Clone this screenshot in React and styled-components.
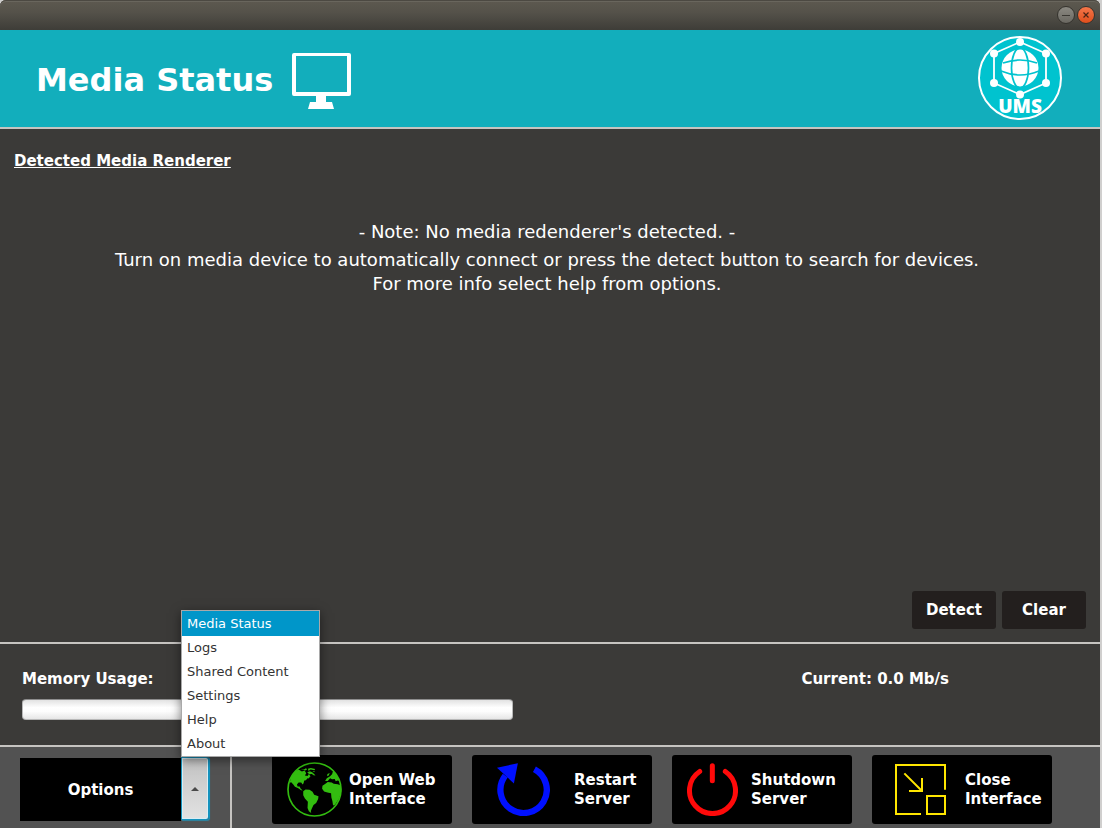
import React, { useState } from 'react';
import styled, { createGlobalStyle } from 'styled-components';

const GlobalStyle = createGlobalStyle`
  * { box-sizing: border-box; }
  body {
    margin: 0;
    background: #d0cfce;
    font-family: 'DejaVu Sans', sans-serif;
    color: #fff;
  }
  button { font-family: inherit; border: 0; padding: 0; cursor: pointer; }
`;

const Window = styled.div`
  display: flex;
  flex-direction: column;
  min-height: 100vh;
  margin-right: 2px;
`;

const TitleBar = styled.div`
  display: flex;
  justify-content: flex-end;
  align-items: center;
  gap: 2px;
  height: 30px;
  padding-right: 5px;
  border-radius: 6px 6px 0 0;
  background: linear-gradient(#5d5950, #55524a 40%, #3e3d38);
  box-shadow: inset 0 1px 0 #4c4942, inset 0 2px 0 #69665d;
`;

const WindowButton = styled.button`
  display: flex;
  width: 18px;
  height: 18px;
  border: 1px solid #35332e;
  border-radius: 50%;
  background: ${(p) => (p.$close ? 'linear-gradient(#f4764a, #df4e1c)' : 'linear-gradient(#8b8982, #6a6861)')};
  svg { display: block; }
`;

const Header = styled.header`
  display: flex;
  align-items: center;
  height: 99px;
  padding: 0 38px 0 36px;
  gap: 19px;
  background: #12aebc;
  border-bottom: 2px solid #c6c4c1;
`;

const Title = styled.h1`
  margin: 2px 0 0;
  font-size: 32px;
  line-height: 38px;
`;

const Monitor = styled.svg`
  margin-top: 4px;
`;

const Logo = styled.div`
  margin: 0 0 2px auto;
  svg { display: block; }
`;

const Main = styled.main`
  display: flex;
  flex-direction: column;
  flex: 1;
  padding: 22px 14px 13px;
  background: #3b3a38;
`;

const Heading = styled.h2`
  margin: 0;
  font-size: 15px;
  line-height: 20px;
  text-decoration: underline;
  text-decoration-thickness: 1px;
  text-underline-offset: 1px;
`;

const Note = styled.div`
  display: flex;
  flex-direction: column;
  gap: 4px;
  margin-top: 49px;
  padding-right: 6px;
  text-align: center;
  font-size: 18px;
  line-height: 24px;
  p { margin: 0; }
`;

const Actions = styled.div`
  display: flex;
  justify-content: flex-end;
  gap: 6px;
  margin-top: auto;
`;

const SmallButton = styled.button`
  width: 84px;
  height: 38px;
  border-radius: 3px;
  background: #231f1e;
  color: #fff;
  font-size: 15px;
  font-weight: bold;
`;

const Stats = styled.section`
  display: flex;
  justify-content: space-between;
  height: 103px;
  padding: 24px 151px 0 22px;
  background: #3b3a38;
  border-top: 2px solid #c6c4c1;
  font-size: 15px;
  font-weight: bold;
  line-height: 22px;
`;

const Memory = styled.div`
  flex: 0 1 491px;
`;

const Meter = styled.div`
  height: 21px;
  margin-top: 9px;
  border: 1px solid #b8b8b8;
  border-top-color: #8d8d8d;
  border-radius: 4px;
  background: linear-gradient(#e2e2e2, #fff 40%, #fdfdfd 60%, #e6e6e6);
`;

const Footer = styled.footer`
  display: flex;
  height: 83px;
  background: #525252;
  border-top: 2px solid #c6c4c1;
`;

const OptionsCell = styled.div`
  display: flex;
  align-items: flex-start;
  flex: 0 0 232px;
  padding: 10px 20px 0;
  border-right: 2px solid #c6c4c1;
`;

const OptionsButton = styled.button`
  width: 161px;
  height: 64px;
  border-top: 1px solid #525252;
  background: #000;
  color: #fff;
  font-size: 15px;
  font-weight: bold;
`;

const Anchor = styled.div`
  position: relative;
`;

const ArrowButton = styled.button`
  display: flex;
  align-items: center;
  justify-content: center;
  width: 28px;
  height: 63px;
  border: 1px solid #1592bd;
  border-radius: 0 3px 3px 0;
  background: linear-gradient(#c2c2c2, #e2e2e2);
  box-shadow: inset 0 0 0 1px #d9edf4, 1px 0 0 #1592bd, 1px 1px 1px #2a87a5;
`;

const Menu = styled.div`
  position: absolute;
  left: 0;
  bottom: 100%;
  width: 139px;
  display: flex;
  flex-direction: column;
  border: 1px solid #a9a9a9;
  background: #fff;
  box-shadow: 0 3px 10px rgba(0, 0, 0, 0.5);
`;

const MenuItem = styled.button`
  height: 24px;
  padding: 0 5px;
  text-align: left;
  font-size: 13px;
  line-height: 24px;
  color: ${(p) => (p.$active ? '#fff' : '#333')};
  background: ${(p) => (p.$active ? '#0096c9' : '#fff')};
  &:first-child { height: 25px; }
`;

const Toolbar = styled.nav`
  display: grid;
  grid-template-columns: repeat(4, 1fr);
  align-items: start;
  gap: 20px;
  flex: 1;
  padding: 8px 48px 0 40px;
`;

const ToolButton = styled.button`
  display: flex;
  align-items: center;
  gap: ${(p) => p.$gap}px;
  height: 69px;
  padding-left: ${(p) => p.$inset}px;
  border-radius: 3px;
  background: #000;
  color: #fff;
  font-size: 15px;
  font-weight: bold;
  line-height: 19px;
  text-align: left;
  svg { flex: none; }
`;

const MonitorIcon = () => (
  <Monitor width="60" height="56" viewBox="0 0 60 56" fill="#fff" aria-hidden="true">
    <path fillRule="evenodd" d="M2 0H57Q59 0 59 2V41Q59 43 57 43H34V49H40L42 56H16L18 49H24V43H2Q0 43 0 41V2Q0 0 2 0ZM4 3V39H55V3Z" />
  </Monitor>
);

const UmsLogo = () => (
  <svg width="84" height="84" viewBox="978 36 84 84" role="img" aria-label="UMS">
    <circle cx="1020" cy="78" r="41" fill="#00c3cf" stroke="#fff" strokeWidth="2" />
    <path d="M1020 42L1046 53.500V83L1020 94.500L994 83V53.500Z" fill="none" stroke="#fff" strokeWidth="1.800" />
    <g fill="#fff">
      <circle cx="1020" cy="42" r="4" />
      <circle cx="1046" cy="53.500" r="4" />
      <circle cx="1046" cy="83" r="4" />
      <circle cx="1020" cy="94.500" r="4" />
      <circle cx="994" cy="83" r="4" />
      <circle cx="994" cy="53.500" r="4" />
      <circle cx="1020" cy="68" r="18.500" />
    </g>
    <g fill="none" stroke="#00c3cf" strokeWidth="1.700">
      <ellipse cx="1020" cy="68" rx="8.500" ry="20" />
      <path d="M1003 63Q1020 57 1037 63M1001 71Q1020 79 1039 71" />
    </g>
    <text x="1020" y="113" textAnchor="middle" fill="#fff" fontFamily="'Open Sans', 'Noto Sans', sans-serif" fontSize="19" fontWeight="800">UMS</text>
  </svg>
);

const GlobeIcon = () => (
  <svg width="55" height="55" viewBox="51 50 166 166" fill="#33bd10" aria-hidden="true">
    <circle cx="134" cy="133" r="80" fill="none" stroke="#33bd10" strokeWidth="5" />
    <path d="M58 116L64 94L76 78L86 73L96 79L104 76L109 84L105 91L113 92L117 86L122 93L116 100L113 99L108 105L103 106L101 114L98 118L94 112L86 112L81 118L83 124L89 124L92 130L98 136L94 135L85 129L75 125L70 118L63 110Z" />
    <path d="M92 71L102 73L108 69L112 72L106 76ZM114 70L123 68L136 71L134 75L122 73L116 77ZM112 81L120 78L127 81L133 86L137 91L131 90L126 86L118 87ZM128 77L135 78L133 81Z" />
    <path d="M100 138L107 133L119 134L128 140L133 149L146 153L145 162L139 174L131 180L126 190L123 198L124 204L117 199L113 189L114 170L105 160L100 150Z" />
    <path d="M167 116L174 110L186 112L192 116L204 117L214 121L215 140L208 160L196 179L190 181L188 168L185 157L184 144L173 142L163 139L157 131L158 122Z" />
    <path d="M166 107L171 99L181 93L187 87L190 77L201 89L210 107L204 106L198 108L195 101L187 102L181 99L174 107ZM173 86L180 83L177 91L172 93Z" />
  </svg>
);

const RestartIcon = () => (
  <svg width="53" height="53" viewBox="110 53 160 160" aria-hidden="true">
    <path d="M223 72A70 70 0 1 1 135 91" fill="none" stroke="#0010ff" strokeWidth="19" />
    <path d="M110 67L173 54L161 115Z" fill="#0010ff" />
  </svg>
);

const PowerIcon = () => (
  <svg width="51" height="53" viewBox="81 53 153 158" fill="none" stroke="#ff0a0a" strokeWidth="15" strokeLinecap="round" aria-hidden="true">
    <path d="M119 78A69 69 0 1 0 196 78M157 61V106" />
  </svg>
);

const CloseIcon = () => (
  <svg width="51" height="51" viewBox="105 57 153 153" fill="none" stroke="#ffe600" strokeWidth="6" aria-hidden="true">
    <path d="M255 134V60H108V207H183M201 153H255V207H201ZM133 85L186 138M147 138H186V99" />
  </svg>
);

const OPTIONS = ['Media Status', 'Logs', 'Shared Content', 'Settings', 'Help', 'About'];

const TOOLS = [
  { lines: ['Open Web', 'Interface'], Icon: GlobeIcon, inset: 15, gap: 7 },
  { lines: ['Restart', 'Server'], Icon: RestartIcon, inset: 25, gap: 24 },
  { lines: ['Shutdown', 'Server'], Icon: PowerIcon, inset: 15, gap: 13 },
  { lines: ['Close', 'Interface'], Icon: CloseIcon, inset: 23, gap: 19 },
];

export default function App() {
  const [open, setOpen] = useState(true);
  const [active, setActive] = useState('Media Status');
  const toggle = () => setOpen(!open);

  return (
    <>
      <GlobalStyle />
      <Window>
        <TitleBar>
          <WindowButton aria-label="Minimize">
            <svg width="16" height="16" viewBox="0 0 16 16" stroke="#3a3833"><path d="M4 8.500H12" /></svg>
          </WindowButton>
          <WindowButton $close aria-label="Close">
            <svg width="16" height="16" viewBox="0 0 16 16" stroke="#4a2415" strokeWidth="1.200"><path d="M5.500 5.500L10.500 10.500M10.500 5.500L5.500 10.500" /></svg>
          </WindowButton>
        </TitleBar>
        <Header>
          <Title>Media Status</Title>
          <MonitorIcon />
          <Logo><UmsLogo /></Logo>
        </Header>
        <Main>
          <Heading>Detected Media Renderer</Heading>
          <Note>
            <p>- Note: No media redenderer's detected. -</p>
            <p>
              Turn on media device to automatically connect or press the detect button to search for devices.
              <br />
              For more info select help from options.
            </p>
          </Note>
          <Actions>
            <SmallButton>Detect</SmallButton>
            <SmallButton>Clear</SmallButton>
          </Actions>
        </Main>
        <Stats>
          <Memory>
            <div id="memory-label">Memory Usage:</div>
            <Meter role="progressbar" aria-labelledby="memory-label" aria-valuenow={0} />
          </Memory>
          <div>Current: 0.0 Mb/s</div>
        </Stats>
        <Footer>
          <OptionsCell>
            <OptionsButton onClick={toggle}>Options</OptionsButton>
            <Anchor>
              <ArrowButton aria-label="Show options" aria-haspopup="menu" aria-expanded={open} onClick={toggle}>
                <svg width="8" height="4" viewBox="0 0 8 4" fill="#4a4a4a"><path d="M0 4L4 0L8 4Z" /></svg>
              </ArrowButton>
              {open && (
                <Menu role="menu">
                  {OPTIONS.map((name) => (
                    <MenuItem key={name} role="menuitem" $active={name === active} onClick={() => setActive(name)}>
                      {name}
                    </MenuItem>
                  ))}
                </Menu>
              )}
            </Anchor>
          </OptionsCell>
          <Toolbar>
            {TOOLS.map(({ lines, Icon, inset, gap }) => (
              <ToolButton key={lines.join(' ')} $inset={inset} $gap={gap}>
                <Icon />
                <span>{lines[0]}<br />{lines[1]}</span>
              </ToolButton>
            ))}
          </Toolbar>
        </Footer>
      </Window>
    </>
  );
}
